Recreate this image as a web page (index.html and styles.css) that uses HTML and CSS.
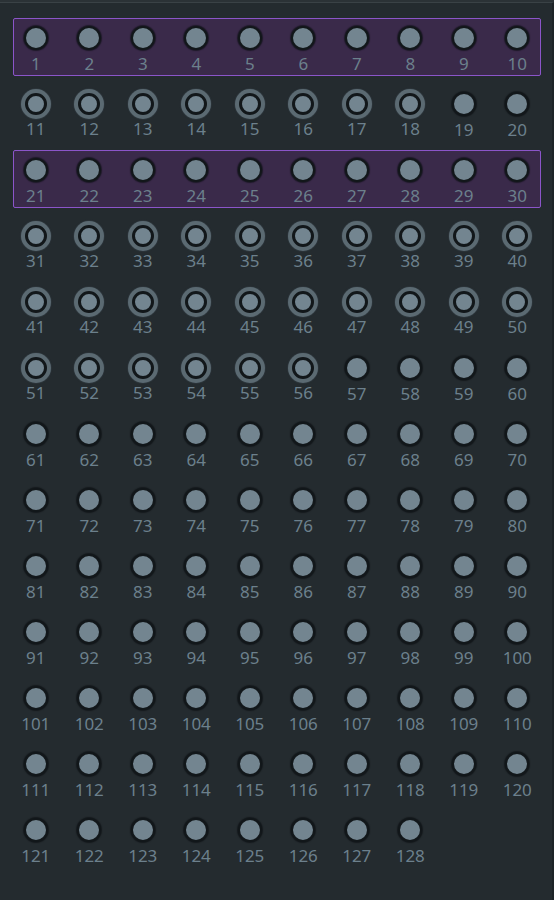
FILE: index.html
```html
<!DOCTYPE html>
<html>
<head>
<meta charset="utf-8">
<link rel="stylesheet" href="styles.css">
<title>Ports</title>
</head>
<body>
<div class="panel">
  <div class="grid" id="grid"></div>
</div>
<script>
  // ring = patched (connected) port, sel = selected bank of ten
  const ringed = new Set();
  for (let n = 11; n <= 18; n++) ringed.add(n);
  for (let n = 31; n <= 56; n++) ringed.add(n);
  const selectedRows = new Set([0, 2]);
  const grid = document.getElementById('grid');
  for (let r = 0; r < 13; r++) {
    const row = document.createElement('div');
    row.className = 'row' + (selectedRows.has(r) ? ' sel' : '');
    for (let c = 0; c < 10; c++) {
      const n = r * 10 + c + 1;
      const port = document.createElement('div');
      port.className = 'port';
      if (n <= 128) {
        const jack = document.createElement('span');
        jack.className = 'jack' + (ringed.has(n) ? ' ring' : '');
        const num = document.createElement('span');
        num.className = 'num';
        num.textContent = n;
        port.append(jack, num);
      }
      row.appendChild(port);
    }
    grid.appendChild(row);
  }
</script>
</body>
</html>
```
FILE: styles.css
```css
html, body {
  margin: 0;
  padding: 0;
  background: #242b2f;
}

.panel {
  width: 552px;
  height: 897px;
  border-top: 1px solid #3a4246;
  margin-top: 2px;
  border-right: 2px solid #1d2326;
  background: #242b2f;
  box-shadow: 0 -2px 0 #2b3236;
  font-family: "Noto Sans", "Open Sans", sans-serif;
}

.grid {
  padding: 11px 0 0 9px;
}

.row {
  width: 535px;
  height: 58px;
  margin: 4px 0 8px;
  display: grid;
  grid-template-columns: repeat(10, 53.5px);
  box-sizing: border-box;
  position: relative;
}

.row.sel::before {
  content: "";
  position: absolute;
  left: 4px;
  right: 3px;
  top: 0;
  bottom: 0;
  background: #3a2a4a;
  border: 1.5px solid #8b55c9;
  border-radius: 2px;
}

.port {
  position: relative;
  display: flex;
  flex-direction: column;
  align-items: center;
}

.jack {
  width: 20px;
  height: 20px;
  margin-top: 8px;
  border-radius: 50%;
  background: #738590;
  border: 2px solid #12171a;
  box-shadow: 0 0 1px 1px rgba(10, 14, 16, 0.6);
  flex: none;
}

.jack.ring {
  width: 16px;
  height: 16px;
  margin-top: 9px;
  margin-bottom: 0;
  border-width: 3px;
  box-shadow: 0 0 0 4px #5b6a72, 0 0 1px 4.5px rgba(60, 72, 80, 0.6);
}

.num {
  margin-top: 3px;
  font-size: 17px;
  line-height: 22px;
  color: #6c808c;
  position: relative;
}
```
